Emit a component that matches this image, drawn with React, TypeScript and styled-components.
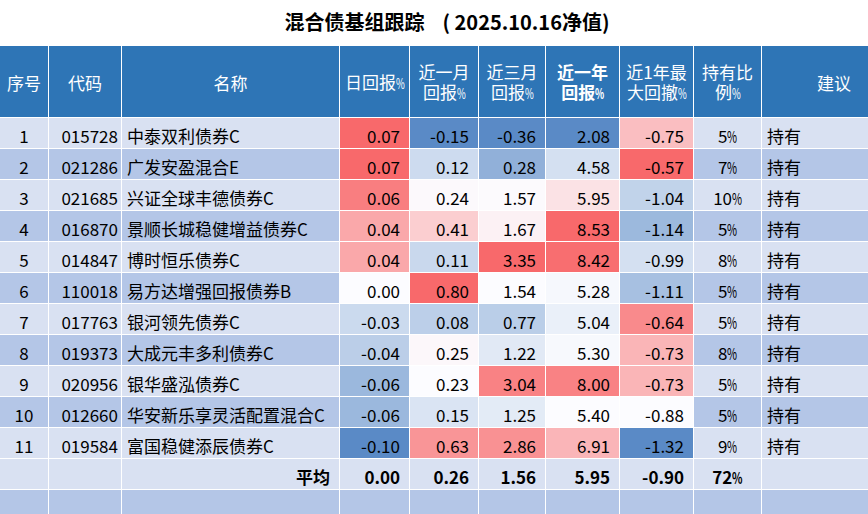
import React from "react";
import styled, { createGlobalStyle } from "styled-components";

const GlobalStyle = createGlobalStyle`
  html, body { margin: 0; padding: 0; background: #ffffff; }
  body { font-family: "Noto Sans CJK SC", "Noto Sans", sans-serif; color: #000; }
`;

const COLS = "48px 72px 217px 69px 68px 66px 73px 73px 67px 106px";

const Page = styled.div`
  width: 868px;
  height: 514px;
  overflow: hidden;
  background: #ffffff;
`;

const Title = styled.div`
  height: 46px;
  display: flex;
  align-items: center;
  justify-content: center;
  padding-left: 26px;
  padding-bottom: 4px;
  box-sizing: border-box;
  font-size: 20px;
  font-weight: 700;
  white-space: pre;
  color: #000;
`;

const TitleDate = styled.span`
  margin-left: 18px;
`;

const Sheet = styled.div`
  display: flex;
  flex-direction: column;
  gap: 1px;
  background: #ffffff;
`;

const Row = styled.div<{ $alt?: boolean; $h?: number }>`
  display: grid;
  grid-template-columns: ${COLS};
  column-gap: 1px;
  height: ${(p) => p.$h ?? 30}px;
  --row-bg: ${(p) => (p.$alt ? "#B4C6E7" : "#D9E1F2")};
`;

const HeadCell = styled.div<{ $bold?: boolean; $pl?: number }>`
  background: #2E75B6;
  color: #ffffff;
  display: flex;
  flex-direction: column;
  align-items: center;
  justify-content: center;
  font-size: 17px;
  line-height: 20px;
  font-weight: ${(p) => (p.$bold ? 700 : 400)};
  padding-left: ${(p) => p.$pl ?? 0}px;
  padding-top: 2px;
  box-sizing: border-box;
  text-align: center;
  white-space: nowrap;
`;

const Cell = styled.div<{ $align?: "left" | "right" | "center"; $bold?: boolean }>`
  background: var(--row-bg);
  display: flex;
  align-items: center;
  justify-content: ${(p) =>
    p.$align === "left" ? "flex-start" : p.$align === "center" ? "center" : "flex-end"};
  padding: 4px ${(p) => (p.$align === "right" ? 9 : 4)}px 0 ${(p) => (p.$align === "left" ? 5 : 4)}px;
  box-sizing: border-box;
  font-size: 17px;
  font-weight: ${(p) => (p.$bold ? 700 : 400)};
  white-space: nowrap;
  overflow: hidden;
  color: #000;
`;

const CodeCell = styled(Cell)`
  padding-right: 3px;
`;

const Pct = styled.span<{ $size?: number }>`
  display: inline-block;
  font-size: ${(p) => p.$size ?? 14}px;
  transform: scaleX(0.68);
  transform-origin: left center;
  margin-right: -5px;
`;

type Fund = {
  no: number;
  code: string;
  name: string;
  vals: number[];
  share: string;
};

const funds: Fund[] = [
  { no: 1, code: "015728", name: "中泰双利债券C", vals: [0.07, -0.15, -0.36, 2.08, -0.75], share: "5" },
  { no: 2, code: "021286", name: "广发安盈混合E", vals: [0.07, 0.12, 0.28, 4.58, -0.57], share: "7" },
  { no: 3, code: "021685", name: "兴证全球丰德债券C", vals: [0.06, 0.24, 1.57, 5.95, -1.04], share: "10" },
  { no: 4, code: "016870", name: "景顺长城稳健增益债券C", vals: [0.04, 0.41, 1.67, 8.53, -1.14], share: "5" },
  { no: 5, code: "014847", name: "博时恒乐债券C", vals: [0.04, 0.11, 3.35, 8.42, -0.99], share: "8" },
  { no: 6, code: "110018", name: "易方达增强回报债券B", vals: [0.0, 0.8, 1.54, 5.28, -1.11], share: "5" },
  { no: 7, code: "017763", name: "银河领先债券C", vals: [-0.03, 0.08, 0.77, 5.04, -0.64], share: "5" },
  { no: 8, code: "019373", name: "大成元丰多利债券C", vals: [-0.04, 0.25, 1.22, 5.3, -0.73], share: "8" },
  { no: 9, code: "020956", name: "银华盛泓债券C", vals: [-0.06, 0.23, 3.04, 8.0, -0.73], share: "5" },
  { no: 10, code: "012660", name: "华安新乐享灵活配置混合C", vals: [-0.06, 0.15, 1.25, 5.4, -0.88], share: "5" },
  { no: 11, code: "019584", name: "富国稳健添辰债券C", vals: [-0.1, 0.63, 2.86, 6.91, -1.32], share: "9" },
];

const averages = [0.0, 0.26, 1.56, 5.95, -0.9];

const RED = [248, 105, 107];
const WHITE = [252, 252, 255];
const BLUE = [90, 138, 198];

function mix(a: number[], b: number[], t: number) {
  const c = a.map((v, i) => Math.round(v + (b[i] - v) * t));
  return `rgb(${c[0]}, ${c[1]}, ${c[2]})`;
}

const stats = [0, 1, 2, 3, 4].map((ci) => {
  const list = funds.map((f) => f.vals[ci]).sort((a, b) => a - b);
  return { min: list[0], mid: list[Math.floor(list.length / 2)], max: list[list.length - 1] };
});

function heat(v: number, ci: number) {
  const { min, mid, max } = stats[ci];
  if (v >= mid) {
    const t = max === mid ? 0 : (v - mid) / (max - mid);
    return mix(WHITE, RED, t);
  }
  const t = mid === min ? 0 : (mid - v) / (mid - min);
  return mix(WHITE, BLUE, t);
}

const Head = () => (
  <Row $h={71}>
    <HeadCell>序号</HeadCell>
    <HeadCell>代码</HeadCell>
    <HeadCell>名称</HeadCell>
    <HeadCell>
      <span>
        日回报<Pct>%</Pct>
      </span>
    </HeadCell>
    <HeadCell>
      <span>近一月</span>
      <span>
        回报<Pct>%</Pct>
      </span>
    </HeadCell>
    <HeadCell>
      <span>近三月</span>
      <span>
        回报<Pct>%</Pct>
      </span>
    </HeadCell>
    <HeadCell $bold>
      <span>近一年</span>
      <span>
        回报<Pct>%</Pct>
      </span>
    </HeadCell>
    <HeadCell>
      <span>近1年最</span>
      <span>
        大回撤<Pct>%</Pct>
      </span>
    </HeadCell>
    <HeadCell>
      <span>持有比</span>
      <span>
        例<Pct>%</Pct>
      </span>
    </HeadCell>
    <HeadCell $pl={38}>建议</HeadCell>
  </Row>
);

export default function App() {
  return (
    <Page>
      <GlobalStyle />
      <Title>
        混合债基组跟踪
        <TitleDate>( 2025.10.16净值)</TitleDate>
      </Title>
      <Sheet>
        <Head />
        {funds.map((f, i) => (
          <Row key={f.code} $alt={i % 2 === 1}>
            <Cell $align="center">{f.no}</Cell>
            <CodeCell $align="right">{f.code}</CodeCell>
            <Cell $align="left">{f.name}</Cell>
            {f.vals.map((v, ci) => (
              <Cell key={ci} $align="right" style={{ background: heat(v, ci) }}>
                {v.toFixed(2)}
              </Cell>
            ))}
            <Cell $align="center">
              <span>
                {f.share}
                <Pct $size={16}>%</Pct>
              </span>
            </Cell>
            <Cell $align="left">持有</Cell>
          </Row>
        ))}
        <Row>
          <Cell />
          <Cell />
          <Cell $align="right" $bold>
            平均
          </Cell>
          {averages.map((v, ci) => (
            <Cell key={ci} $align="right" $bold>
              {v.toFixed(2)}
            </Cell>
          ))}
          <Cell $align="center" $bold>
            <span>
              72<Pct $size={16}>%</Pct>
            </span>
          </Cell>
          <Cell />
        </Row>
        <Row $alt>
          {Array.from({ length: 10 }).map((_, i) => (
            <Cell key={i} />
          ))}
        </Row>
      </Sheet>
    </Page>
  );
}
